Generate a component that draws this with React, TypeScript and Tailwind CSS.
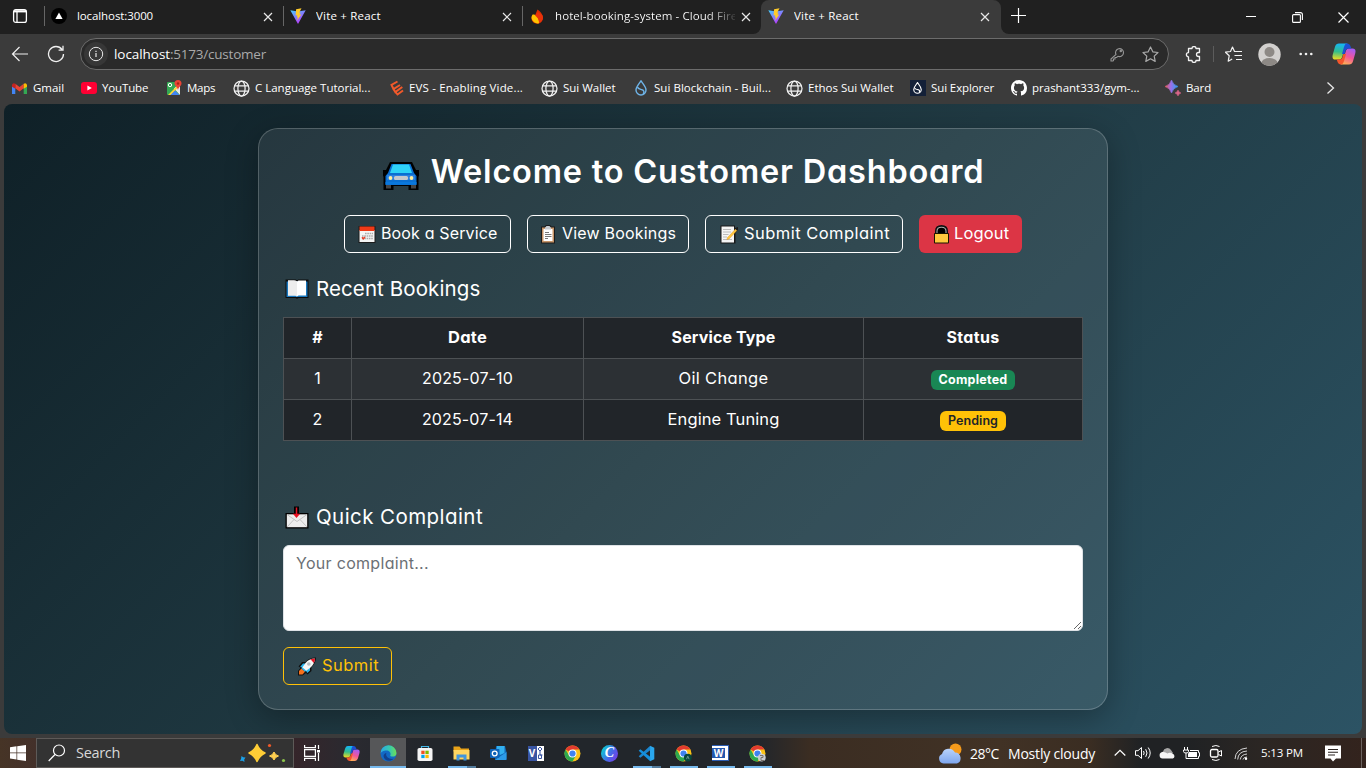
import type { ReactNode } from "react";

function Close() {
  return (
    <svg width="10" height="10" viewBox="0 0 10 10" stroke="#e8e8e8" strokeWidth="1.2" fill="none">
      <path d="M1 1l8 8M9 1l-8 8" />
    </svg>
  );
}

function Vite({ id }: { id: string }) {
  return (
    <svg width="16" height="16" viewBox="0 0 16 16">
      <defs>
        <linearGradient id={id} x1="0" y1="0" x2="0.6" y2="1">
          <stop offset="0" stopColor="#41d1ff" />
          <stop offset="1" stopColor="#bd34fe" />
        </linearGradient>
      </defs>
      <path d="M.3 2.200L8 3.400l7.700-1.200L8.300 15.600q-.3.5-.6 0z" fill={`url(#${id})`} />
      <path d="M11.500.2L6.100 1.300l-.5 6.200 1.700-.3-.5 2.300 1.100-.3-.9 3.600 4.300-6.300-1.800.3 1-2.300-1.300.2z" fill="#ffcb2b" />
    </svg>
  );
}

function Globe() {
  return (
    <svg width="17" height="17" viewBox="0 0 17 17" fill="none" stroke="#f0f0f0" strokeWidth="1.25">
      <circle cx="8.500" cy="8.500" r="7.500" />
      <ellipse cx="8.500" cy="8.500" rx="3.600" ry="7.500" />
      <path d="M1.500 5.800h14M1.500 11.200h14" />
    </svg>
  );
}

function Drop({ color }: { color: string }) {
  return (
    <svg width="12" height="16" viewBox="0 0 12 16" fill="none" stroke={color} strokeWidth="1.4">
      <path d="M6 .9C4 4 1 6.700 1 10a5 5 0 0010 0C11 6.700 8 4 6 .9z" />
      <path d="M2.500 7c.5 2.600 4 2 5.800 3.400 1 .9.8 2.500-.3 3.600" />
    </svg>
  );
}

function Copilot({ id, size }: { id: string; size: number }) {
  return (
    <svg width={size} height={size} viewBox="0 0 24 24">
      <defs>
        <linearGradient id={id + "a"} x1="0.3" y1="0" x2="0.2" y2="1">
          <stop offset="0" stopColor="#16b5f5" />
          <stop offset="0.5" stopColor="#32bd8c" />
          <stop offset="1" stopColor="#f2dc20" />
        </linearGradient>
        <linearGradient id={id + "b"} x1="0.7" y1="0" x2="0.3" y2="1">
          <stop offset="0" stopColor="#a55cf5" />
          <stop offset="0.5" stopColor="#f2559a" />
          <stop offset="1" stopColor="#ffb152" />
        </linearGradient>
      </defs>
      <path d="M7 1.500h9q-2 .3-3 4l-3 10q-.8 2-2.500 2H3.500Q-.5 17.500.8 12.500L3 4.800Q4 1.500 7 1.500z" fill={`url(#${id}a)`} />
      <path d="M17 22.500H8q2-.3 3-4l3-10q.8-2 2.500-2h4q4 0 2.700 5L21 19.200q-1 3.300-4 3.300z" fill={`url(#${id}b)`} />
      <path d="M12.500 1.500H15q2.700 0 3.600 3l.8 2h-3q-2 0-2.800 2l-1 3.500H10l2-7q.8-2.800 2-3.500z" fill="#1c50d4" />
      <path d="M11.500 22.500H9q-2.700 0-3.600-3l-.6-2h3q2 0 2.600-2l1-3.500H14l-2 7q-.8 2.800-2 3.500z" fill="#f4562c" />
    </svg>
  );
}

function Tab({ icon, children, className = "", divider = true }: { icon: ReactNode; children: ReactNode; className?: string; divider?: boolean }) {
  return (
    <div className={"mb-[2px] flex h-[31px] items-center " + className}>
      <span className={"h-[20px] w-px " + (divider ? "bg-[#666]" : "")} />
      <span className="ml-[6px] flex w-[16px] justify-center">{icon}</span>
      <span className="ml-[10px] w-[180px] overflow-hidden text-[11.5px] whitespace-nowrap text-white">{children}</span>
      <span className="ml-[6px] pt-px"><Close /></span>
    </div>
  );
}

function Mark({ icon, children, className }: { icon: ReactNode; children: ReactNode; className: string }) {
  return (
    <div className={"flex shrink-0 items-center text-[11.5px] whitespace-nowrap text-white " + className}>
      <span className="flex w-[17px] shrink-0 justify-center pt-px">{icon}</span>
      <span>{children}</span>
    </div>
  );
}

function Browser() {
  return (
    <header className="h-[104px] bg-[#3b3b3b] font-['Open_Sans',sans-serif]">
      <div className="flex h-[34px] bg-[#3b3b3b]">
        <div className="flex w-[761px] items-center rounded-br-[8px] bg-[#202020]">
          <svg className="mb-[2px] ml-[12px]" width="16" height="16" viewBox="0 0 16 16" fill="none" stroke="#fff" strokeWidth="1.3">
            <rect x="1.600" y="1.600" width="12.800" height="12.800" rx="2.200" />
            <path d="M2 3.300h12" strokeWidth="2.200" />
            <path d="M5 4v10" />
          </svg>
          <Tab
            className="ml-[16px] w-[239px]"
            icon={
              <svg width="16" height="16" viewBox="0 0 16 16">
                <circle cx="8" cy="8" r="8" fill="#000" />
                <path d="M8 4.500l3.600 6.500H4.400z" fill="#fff" />
              </svg>
            }
          >
            <span className="tracking-[-0.1px]">localhost:3000</span>
          </Tab>
          <Tab className="w-[239px]" icon={<Vite id="v1" />}>
            <span className="tracking-[0.2px]">Vite + React</span>
          </Tab>
          <Tab
            className="w-[239px]"
            icon={
              <svg width="12" height="15" viewBox="0 0 12 15">
                <path d="M6.500.5C9 2 12 5.500 12 9a5.600 5.600 0 01-5.800 5.700C3 14.700.5 12.500.5 9.300c0-1.300.5-2.500 1.200-3.500L4 6.500z" fill="#dd2c00" />
                <path d="M1.700 5.500C4 5 8.500 8 8 14.200A6 6 0 01.5 9c0-1.500.5-2.700 1.200-3.500z" fill="#ffc400" />
                <path d="M4 6.500C5.800 7.800 8.300 10 8 14.200c2-1 3.800-3 4-5.200 0-1-.3-2-.7-3L7 3z" fill="#e8320a" />
              </svg>
            }
          >
            <span className="bg-linear-to-r from-white from-84% to-[#333] bg-clip-text tracking-[0.08px] text-transparent">hotel-booking-system - Cloud Fire</span>
          </Tab>
        </div>
        <div className="flex w-[240px] bg-[#202020]">
          <div className="flex w-[240px] items-center rounded-t-[8px] bg-[#3b3b3b]">
            <Tab divider={false} icon={<Vite id="v2" />}>
              <span className="tracking-[0.2px]">Vite + React</span>
            </Tab>
          </div>
        </div>
        <div className="flex flex-1 items-center rounded-bl-[8px] bg-[#202020]">
          <svg className="mb-[3px] ml-[10px]" width="15" height="15" viewBox="0 0 15 15" stroke="#fff" strokeWidth="1.200">
            <path d="M7.500 0v15M0 7.500h15" />
          </svg>
          <svg className="mb-[2px] ml-[220px]" width="10" height="10" viewBox="0 0 10 10" stroke="#fff">
            <path d="M0 5.500h10" />
          </svg>
          <svg className="ml-[36px]" width="11" height="11" viewBox="0 0 11 11" fill="none" stroke="#fff" strokeWidth="1.100">
            <rect x=".6" y="2.600" width="7.800" height="7.800" rx="1" />
            <path d="M3 .6h5.400q2 0 2 2V8" />
          </svg>
          <svg className="ml-[35px]" width="11" height="11" viewBox="0 0 11 11" stroke="#fff" strokeWidth="1.200">
            <path d="M.5.5l10 10M10.500.5l-10 10" />
          </svg>
        </div>
      </div>

      <div className="flex h-[39px] items-center pt-[1px]">
        <svg className="ml-[11px]" width="18" height="16" viewBox="0 0 18 16" fill="none" stroke="#f0f0f0" strokeWidth="1.200">
          <path d="M17 8H1.500M8.500 1l-7 7 7 7" />
        </svg>
        <svg className="ml-[18px]" width="18" height="18" viewBox="0 0 18 18" fill="none" stroke="#f0f0f0" strokeWidth="1.300">
          <path d="M16.500 9A7.500 7.500 0 1115 4.500M16 .8v4.400h-4.400" />
        </svg>
        <div className="ml-[15px] flex h-[32px] w-[1089px] items-center rounded-full border border-[#6c6c6c] bg-[#2a2a2a]">
          <span className="ml-[3px] flex size-[24px] items-center justify-center rounded-full bg-[#373737]">
            <svg width="16" height="16" viewBox="0 0 16 16" fill="none" stroke="#e8e8e8">
              <circle cx="8" cy="8" r="6.700" />
              <path d="M8 7v4M8 4.800v1.200" strokeWidth="1.200" />
            </svg>
          </span>
          <span className="ml-[6px] text-[13.5px] tracking-[-0.06px] text-white">localhost</span>
          <span className="text-[13.5px] tracking-[-0.22px] text-[#a9a9a9]">:5173/customer</span>
          <svg className="ml-auto" width="15" height="15" viewBox="0 0 15 15" fill="none" stroke="#969696" strokeWidth="1.100">
            <path d="M6 7.500A4 4 0 118 9.300L6.500 10.500H5v1.500H3.500v1.500L3 14H1v-2z" />
            <circle cx="10.800" cy="4" r=".7" />
          </svg>
          <svg className="mr-[9px] ml-[17px]" width="17" height="17" viewBox="0 0 17 17" fill="none" stroke="#a9a9a9" strokeWidth="1.200" strokeLinejoin="round">
            <path d="M8.500 1l2.300 4.800 5.200.7-3.800 3.600 1 5.300-4.700-2.600-4.700 2.600 1-5.300L1 6.500l5.200-.7z" />
          </svg>
        </div>
        <svg className="ml-[16px]" width="17" height="17" viewBox="0 0 17 17" fill="none" stroke="#f2f2f2" strokeWidth="1.300" strokeLinejoin="round">
          <path d="M5 2.500h2a2 2 0 014 0h3.500v4h-1a2 2 0 000 4h1v4H11a2 2 0 01-4 0H3.500v-3.700a2.100 2.100 0 010-4.200V2.500z" />
        </svg>
        <span className="ml-[11px] h-[16px] w-px bg-[#5c5c5c]" />
        <svg className="ml-[11px]" width="17" height="17" viewBox="0 0 17 17" fill="none" stroke="#f2f2f2" strokeWidth="1.200" strokeLinejoin="round">
          <path d="M10 5.500h-.5L7.500 1 5.500 5.500l-5 .7 3.700 3.600-1 5.400 4-2.200M10 5.500h7M9.500 9.500H17M11 13.500h6" />
        </svg>
        <svg className="ml-[16px]" width="23" height="23" viewBox="0 0 23 23">
          <clipPath id="av"><circle cx="11.500" cy="11.500" r="11.200" /></clipPath>
          <g clipPath="url(#av)">
            <path d="M0 0h23v23H0z" fill="#d2d0ce" />
            <circle cx="11.500" cy="9" r="5" fill="#8d8985" />
            <ellipse cx="11.500" cy="20" rx="8" ry="5" fill="#8d8985" />
          </g>
        </svg>
        <svg className="ml-[18px]" width="14" height="4" viewBox="0 0 14 4" fill="#f2f2f2">
          <circle cx="1.700" cy="2" r="1.300" />
          <circle cx="7" cy="2" r="1.300" />
          <circle cx="12.300" cy="2" r="1.300" />
        </svg>
        <span className="ml-[19px]"><Copilot id="c1" size={24} /></span>
      </div>

      <div className="flex h-[29px] items-center pl-[11px]">
        <Mark
          className="w-[69px] gap-[5px] tracking-[-0.04px]"
          icon={
            <svg width="15" height="11" viewBox="0 0 15 11">
              <path d="M0 1.500V11h3.300V4z" fill="#4285f4" />
              <path d="M15 1.500V11h-3.300V4z" fill="#34a853" />
              <path d="M3.300.7l4.200 3.200L11.700.7v4.500L7.500 8.400 3.300 5.200z" fill="#ea4335" />
              <path d="M15 1.700v2L11.700 5.700V.7Q14-.7 15 1.700z" fill="#fbbc04" />
              <path d="M0 1.700v2L3.300 5.700V.7Q1-.7 0 1.700z" fill="#c5221f" />
            </svg>
          }
        >
          Gmail
        </Mark>
        <Mark
          className="w-[85px] gap-[5px] tracking-[-0.15px]"
          icon={
            <svg width="16" height="12" viewBox="0 0 16 12">
              <rect width="16" height="12" rx="3" fill="#f03" />
              <path d="M6.400 3.400L10.800 6l-4.400 2.600z" fill="#fff" />
            </svg>
          }
        >
          YouTube
        </Mark>
        <Mark
          className="w-[68px] gap-[5px] tracking-[-0.25px]"
          icon={
            <svg width="16" height="16" viewBox="0 0 16 16">
              <rect x="1" y="2" width="13" height="13" rx="1" fill="#34a853" />
              <path d="M8 8.500L14 3v12z" fill="#e8eaed" />
              <path d="M2 15L13 4v2.500L5 15z" fill="#fdd835" />
              <path d="M4.500 15L9 10.500 13.500 15z" fill="#4285f4" />
              <circle cx="4" cy="5" r="1.700" fill="none" stroke="#fff" />
              <path d="M12 0a3.500 3.500 0 00-3.500 3.500C8.500 6 11.500 7 12 10c.5-3 3.500-4 3.500-6.500A3.500 3.500 0 0012 0z" fill="#ea4335" />
              <circle cx="12" cy="3.500" r="1.200" fill="#a52714" />
            </svg>
          }
        >
          Maps
        </Mark>
        <Mark className="w-[155px] gap-[5px]" icon={<Globe />}>C Language Tutorial...</Mark>
        <Mark
          className="w-[153px] gap-[4px] tracking-[0.16px]"
          icon={
            <svg width="16" height="16" viewBox="0 0 16 16" fill="none" stroke="#f2592b" strokeWidth="2">
              <path d="M8.500 1.500L2.500 5l2 4L11 5" />
              <path d="M4.500 9l1.800 3 7-5M6.500 12l2 2.500 5.500-4" />
            </svg>
          }
        >
          EVS - Enabling Vide...
        </Mark>
        <Mark className="w-[91px] gap-[5px]" icon={<Globe />}>Sui Wallet</Mark>
        <Mark className="w-[154px] gap-[5px] tracking-[0.04px]" icon={<Drop color="#6fb4e8" />}>Sui Blockchain - Buil...</Mark>
        <Mark className="w-[123px] gap-[5px]" icon={<Globe />}>Ethos Sui Wallet</Mark>
        <Mark
          className="w-[101px] gap-[5px] tracking-[-0.1px]"
          icon={
            <span className="flex size-[16px] items-center justify-center bg-[#132038]">
              <svg width="9" height="12" viewBox="0 0 12 16" fill="none" stroke="#fff" strokeWidth="1.500">
                <path d="M6 .9C4 4 1 6.700 1 10a5 5 0 0010 0C11 6.700 8 4 6 .9z" />
                <path d="M2.500 8c.5 2.600 4 1.500 5.800 3 1 .9.8 2-.3 3" />
              </svg>
            </span>
          }
        >
          Sui Explorer
        </Mark>
        <Mark
          className="w-[154px] gap-[5px]"
          icon={
            <svg width="16" height="16" viewBox="0 0 16 16" fill="#fff">
              <path d="M8 0C3.580 0 0 3.580 0 8c0 3.540 2.290 6.530 5.470 7.590.4.070.55-.17.55-.38 0-.19-.01-.82-.01-1.490-2.010.37-2.530-.49-2.690-.94-.09-.23-.48-.94-.82-1.130-.28-.15-.68-.52-.01-.53.63-.01 1.080.58 1.230.82.72 1.210 1.870.87 2.330.66.07-.52.28-.87.51-1.070-1.780-.2-3.640-.89-3.640-3.950 0-.87.31-1.590.82-2.150-.08-.2-.36-1.020.08-2.120 0 0 .67-.21 2.200.82.64-.18 1.320-.27 2-.27s1.360.09 2 .27c1.530-1.040 2.200-.82 2.200-.82.44 1.100.16 1.920.08 2.120.51.56.82 1.270.82 2.150 0 3.070-1.870 3.750-3.650 3.950.29.25.54.73.54 1.480 0 1.070-.01 1.930-.01 2.200 0 .21.15.46.55.38A8.010 8.010 0 0016 8c0-4.420-3.580-8-8-8z" />
            </svg>
          }
        >
          prashant333/gym-...
        </Mark>
        <Mark
          className="w-[162px] gap-[5px] tracking-[-0.1px]"
          icon={
            <svg width="16" height="16" viewBox="0 0 16 16">
              <defs>
                <linearGradient id="bard">
                  <stop offset="0" stopColor="#ec5b57" />
                  <stop offset="0.45" stopColor="#9c6fe8" />
                  <stop offset="1" stopColor="#28a0f0" />
                </linearGradient>
              </defs>
              <path d="M6.500 0q1.500 5 6.500 6.500-5 1.500-6.500 6.500Q5 8 0 6.500 5 5 6.500 0z" fill="url(#bard)" stroke="url(#bard)" strokeWidth=".6" />
              <path d="M13 10q.7 2.300 3 3-2.300.7-3 3-.7-2.300-3-3 2.300-.7 3-3z" fill="#d9658a" stroke="#d9658a" strokeWidth=".5" />
            </svg>
          }
        >
          Bard
        </Mark>
        <svg className="shrink-0" width="9" height="14" viewBox="0 0 9 14" fill="none" stroke="#e8e8e8" strokeWidth="1.300">
          <path d="M1.500 1.500L7.500 7l-6 5.500" />
        </svg>
      </div>
    </header>
  );
}

function Car() {
  return (
    <svg width="38" height="32" viewBox="0 0 38 32">
      <path d="M8 2h22l4 8h3v5.500L36.500 17v13h-10v-4h-15v4h-10V17L1 15.500V10h3z" fill="#000" />
      <rect x="4" y="23.500" width="5" height="5" fill="#454545" />
      <rect x="29" y="23.500" width="5" height="5" fill="#454545" />
      <path d="M9.500 4h19l3.500 9 2.500 3v9h-31v-9L6 13z" fill="#0a6fd0" />
      <path d="M11 4.500h16l3 8.500H8z" fill="#2fd2f7" />
      <path d="M5 15h28v5H5z" fill="#2b7fe0" />
      <path d="M3.500 22h31v2.500h-31z" fill="#0a78dc" />
      <rect x="12" y="16" width="14" height="4" rx="1.500" fill="#c4c8ce" />
      <circle cx="8.500" cy="18" r="1.900" fill="#fdf0a0" />
      <circle cx="29.500" cy="18" r="1.900" fill="#fdf0a0" />
    </svg>
  );
}

function CalendarIcon() {
  return (
    <svg width="18" height="19" viewBox="0 0 18 19">
      <rect x=".5" y="1" width="17" height="17" fill="#1d1d1d" />
      <path d="M1.500 5h15v12h-15z" fill="#f4f4f4" />
      <path d="M1.500 1.500h15V6h-15z" fill="#f03a17" />
      <path d="M7 8.500h8M4 11h11M4 13.500h11" stroke="#aaa" strokeWidth="1.600" strokeDasharray="1.600 .7" />
      <path d="M4 12.200l1.300 1.600L7 12" stroke="#e8412a" strokeWidth="1.500" fill="none" />
    </svg>
  );
}

function ClipboardIcon() {
  return (
    <svg width="16" height="19" viewBox="0 0 16 19">
      <path d="M1 1.500h3.500L6 0h4l1.500 1.500H15V18.500H1z" fill="#1b1b1b" />
      <rect x="2" y="2.500" width="12" height="15" fill="#c69468" />
      <path d="M3.500 4h9v12h-9z" fill="#fff" />
      <path d="M5 2.800L6.500 1h3L11 2.800V4.500H5z" fill="#c7cbd0" />
      <path d="M5 7.500h4M5 9.500h6.500M5 11.500h6.500M5 13.500h3" stroke="#777" />
    </svg>
  );
}

function MemoIcon() {
  return (
    <svg width="19" height="19" viewBox="0 0 19 19">
      <path d="M.5.500H15V3l3-1v3l-2.500 3v10.500H.5z" fill="#191919" />
      <path d="M1.500 1.500H14V17.500H1.500z" fill="#f5f5f5" />
      <path d="M3 4.500h8M3 7h8M3 9.500h5.500M3 12h4M3 14.500h9" stroke="#bbb" />
      <path d="M15.500 4l1.500 1.500L9 14l-2.200.7.700-2.200z" fill="#ffc83d" stroke="#d98b20" strokeWidth=".4" />
      <path d="M15.500 4l1-1 1.400 1.400-.9 1z" fill="#222" />
    </svg>
  );
}

function LockIcon() {
  return (
    <svg width="17" height="19" viewBox="0 0 17 19">
      <path d="M3 9V6q0-5 5.500-5T14 6v3" fill="#000" stroke="#111" strokeWidth="2" />
      <path d="M4 9V6.200q0-4 4.500-4t4.500 4V9" fill="none" stroke="#a9a9a9" strokeWidth="1.100" />
      <rect x="1" y="8" width="15" height="10.500" rx="1" fill="#1a1400" />
      <rect x="2" y="9" width="13" height="8.500" fill="#ffc83d" />
    </svg>
  );
}

function BookIcon() {
  return (
    <svg width="24" height="20" viewBox="0 0 24 20">
      <path d="M.5.500h10.500l1 .7 1-.7h10.500v18.500H13.500l-1.500.8-1.500-.8H.5z" fill="#0c0c0c" />
      <path d="M1.500 2.500H12V18H1.500zM12 2.500h10.500V18H12z" fill="#1877bd" />
      <path d="M3 1.500h7.500L12 2.500l1.500-1H21v15h-7.500l-1.500 1-1.500-1H3z" fill="#fff" />
      <path d="M12 2.500L9 1.500H3v15h7.500l1.500 1z" fill="#ededed" />
    </svg>
  );
}

function MailIcon() {
  return (
    <svg width="24" height="23" viewBox="0 0 24 23">
      <path d="M.5 7H9V.500h5V7h9.500v15.500H.5z" fill="#000" />
      <path d="M1.800 8.300h20.400v12.900H1.800z" fill="#ededed" />
      <path d="M2 8.500l10 7 10-7M2 21l7-7.500M22 21l-7-7.500" fill="none" stroke="#c3c3c3" />
      <path d="M11.500 1.500v8.500M9.500 8.500l2 2.300 2-2.300z" stroke="#e81224" strokeWidth="1.500" fill="#e81224" />
    </svg>
  );
}

function RocketIcon() {
  return (
    <svg width="20" height="19" viewBox="0 0 20 19">
      <path d="M19 .5c-5 0-8 1.500-10.500 4.500H5L1.500 9.500l2 1.200L1 14v4.500h4.500L9 16l1.500 1.500 4-3.500v-4C17.500 7.500 19 4.500 19 .5z" fill="#101010" />
      <path d="M6 6.500h3l-3.300 4.500-2.500-1.300zM13 10.500v3L10.300 16l-1.500-2.500z" fill="#28b5ee" />
      <path d="M17.800 1.500c-4 0-7 1.500-9.300 4.500L5 11l3.500 3.200L13 11c3-2.500 4.800-5.500 4.800-9.500z" fill="#f6f6f6" />
      <path d="M18 1.500l-4.500.8 3.300 3.700Q18 4 18 1.500z" fill="#e81224" />
      <circle cx="11.800" cy="7" r="1.800" fill="#b5bbc1" />
      <path d="M4.500 11.500L8 14.800l-2.500 2.700H2V14z" fill="#f7711c" />
      <path d="M5 11l3.500 3.200" stroke="#28b5ee" strokeWidth="1.600" />
    </svg>
  );
}

function Dashboard() {
  return (
    <main className="mx-[4px] flex h-[630px] justify-center overflow-hidden rounded-[8px] bg-[linear-gradient(135deg,#0f2027,#203a43_50%,#2c5364)] pt-[24px] font-['Inter',sans-serif] text-white [font-feature-settings:'cv11']">
      <section className="h-[582px] w-[850px] rounded-[20px] border border-white/20 bg-white/8 p-[24px] shadow-[0_8px_32px_rgba(0,0,0,0.3)]">
        <h1 className="flex h-[38px] items-center justify-center gap-[11px] text-[32.5px] font-semibold whitespace-nowrap">
          <span className="mt-[7px]"><Car /></span>
          <span className="tracking-[0.8px]">Welcome to Customer Dashboard</span>
        </h1>
        <nav className="mt-[24px] flex justify-center gap-[16px] text-[16px] whitespace-nowrap">
          <button className="flex h-[38px] w-[167px] items-center gap-[5px] rounded-[6px] border border-white pl-[13px]">
            <CalendarIcon />
            <span className="mb-[2px] tracking-[0.15px]">Book a Service</span>
          </button>
          <button className="flex h-[38px] w-[162px] items-center gap-[5px] rounded-[6px] border border-white pl-[12px]">
            <ClipboardIcon />
            <span className="mb-[2px] ml-px tracking-[0.19px]">View Bookings</span>
          </button>
          <button className="flex h-[38px] w-[198px] items-center gap-[5px] rounded-[6px] border border-white pl-[14px]">
            <MemoIcon />
            <span className="mb-[2px] text-[16.5px] tracking-[0.46px]">Submit Complaint</span>
          </button>
          <button className="flex h-[38px] w-[103px] items-center gap-[4px] rounded-[6px] bg-[#dc3545] pl-[14px]">
            <LockIcon />
            <span className="mb-[2px] text-[16.5px] tracking-[0.15px]">Logout</span>
          </button>
        </nav>
        <h2 className="mt-[24px] flex h-[24px] items-center gap-[7px] pl-[2px] text-[20.5px]">
          <BookIcon />
          <span className="tracking-[0.1px]">Recent Bookings</span>
        </h2>
        <table className="mt-[16px] w-[800px] table-fixed border-collapse text-center text-[16px] [&_td]:h-[41px] [&_td]:border [&_td]:border-[#4d5154] [&_td]:p-0 [&_td]:pb-[2px] [&_th]:h-[41px] [&_th]:border [&_th]:border-[#4d5154] [&_th]:p-0 [&_th]:pb-[2px]">
          <colgroup>
            <col className="w-[68px]" />
            <col className="w-[232px]" />
            <col className="w-[280px]" />
            <col className="w-[219px]" />
          </colgroup>
          <thead className="bg-[#212529] font-bold">
            <tr>
              <th>#</th>
              <th className="text-[16.5px] tracking-[0.25px]">Date</th>
              <th className="tracking-[0.13px]">Service Type</th>
              <th className="tracking-[0.32px]">Status</th>
            </tr>
          </thead>
          <tbody>
            <tr className="bg-[#2c3034]">
              <td>1</td>
              <td className="tracking-[0.15px]">2025-07-10</td>
              <td className="text-[16.5px] tracking-[0.34px]">Oil Change</td>
              <td>
                <span className="mx-auto mt-[4px] flex h-[20px] w-[84px] items-center justify-center rounded-[6px] bg-[#198754] text-[12.5px] font-bold tracking-[0.23px]">Completed</span>
              </td>
            </tr>
            <tr className="bg-[#212529]">
              <td>2</td>
              <td className="tracking-[0.15px]">2025-07-14</td>
              <td className="text-[16.5px] tracking-[0.1px]">Engine Tuning</td>
              <td>
                <span className="mx-auto mt-[4px] flex h-[20px] w-[66px] items-center justify-center rounded-[6px] bg-[#ffc107] text-[12.5px] font-semibold tracking-[0.06px] text-[#212529]">Pending</span>
              </td>
            </tr>
          </tbody>
        </table>
        <h2 className="mt-[64px] flex h-[24px] items-center gap-[7px] pl-[2px] text-[20.5px]">
          <MailIcon />
          <span className="tracking-[0.43px]">Quick Complaint</span>
        </h2>
        <textarea
          className="mt-[16px] block h-[86px] w-[800px] resize rounded-[6px] border border-[#dee2e6] bg-white px-[12px] py-[5px] text-[16px] leading-[24px] tracking-[0.3px] text-[#212529] placeholder:text-[#6b7075]"
          placeholder="Your complaint..."
        />
        <button className="mt-[16px] flex h-[38px] w-[109px] items-center gap-[5px] rounded-[6px] border border-[#ffc107] pl-[13px] text-[16.5px] text-[#ffc107]">
          <RocketIcon />
          <span className="mb-[2px] tracking-[0.45px]">Submit</span>
        </button>
      </section>
    </main>
  );
}

function Chrome({ badge }: { badge?: ReactNode }) {
  return (
    <svg width="17" height="17" viewBox="0 0 17 17">
      <circle cx="8.500" cy="8.500" r="8" fill="#fbc116" />
      <path d="M8.500 8.500L1.570 4.500a8 8 0 0113.860 0z" fill="#e33b2e" />
      <path d="M1.570 4.500A8 8 0 008.500 16.500L12 10.500 8.500 8.500 5 10.500z" fill="#2da94f" />
      <path d="M8.500 4.500h6.930L12 10.500z" fill="#fbc116" />
      <circle cx="8.500" cy="8.500" r="4" fill="#fff" />
      <circle cx="8.500" cy="8.500" r="3.100" fill="#3f82f0" />
      {badge}
    </svg>
  );
}

function TaskIcon({ children, className = "w-[37px]", bar = "" }: { children: ReactNode; className?: string; bar?: string }) {
  return (
    <span className={"flex h-[30px] shrink-0 flex-col items-center justify-between " + className}>
      <span className="flex h-[28px] items-center pt-[2px]">{children}</span>
      <span className={"h-[2px] " + bar} />
    </span>
  );
}

const BAR = "w-[28px] bg-[#76b9ed]";
const BAR_MULTI = "w-[28px] bg-[linear-gradient(90deg,#76b9ed_19px,#527b9c_19px)]";

function Taskbar() {
  return (
    <footer className="flex h-[30px] items-center overflow-hidden bg-[linear-gradient(90deg,#463426_0px,#43302a_36px,#35252a_294px,#2a2a30_350px,#22262b_430px,#22262b_760px,#3b2d22_810px,#413225_1000px,#3a2d22_1090px,#202224_1140px,#202224_1190px,#2b2623_1260px,#33231d_1366px)] font-['Open_Sans',sans-serif] whitespace-nowrap text-white">
      <svg className="ml-[10px] shrink-0" width="16" height="16" viewBox="0 0 16 16" fill="#fff">
        <path d="M0 2.200l6.500-.9v6.200H0zM7.200 1.200L16 0v7.500H7.200zM0 8.300h6.500v6.200L0 13.600zM7.200 8.300H16V16l-8.800-1.200z" />
      </svg>
      <div className="ml-[10px] flex h-[30px] w-[258px] shrink-0 items-center border border-[#5d5a58] bg-[#333]">
        <svg className="ml-[11px]" width="18" height="18" viewBox="0 0 18 18" fill="none" stroke="#fff" strokeWidth="1.200">
          <circle cx="11" cy="6.500" r="5.500" />
          <path d="M7 10.500L.7 17" />
        </svg>
        <span className="ml-[10px] text-[14.5px] tracking-[-0.32px] text-[#d8d8d8]">Search</span>
        <svg className="mr-[7px] ml-auto" width="48" height="22" viewBox="0 0 48 22">
          <path d="M19 2.500q2.500 6 8 8.500-5.500 2.500-8 8.500-2.500-6-8-8.500 5.500-2.500 8-8.500z" fill="#ffcd36" stroke="#ffcd36" strokeLinejoin="round" strokeWidth="1.500" />
          <path d="M36 10q1 3 4.500 4-3.500 1-4.500 4-1-3-4.500-4 3.500-1 4.500-4z" fill="#ffcf50" stroke="#ffcf50" />
          <path d="M3.500 14l1.700 1.300 2.300.2-1.300 2 .3 2.500-2-1.200-2.500.3 1-2.200z" fill="#1ba1e8" />
          <circle cx="31.500" cy="3.500" r="1.600" fill="#f25a29" />
          <circle cx="45.500" cy="18.500" r="1.600" fill="#8bc34a" />
        </svg>
      </div>
      <TaskIcon>
        <svg width="17" height="16" viewBox="0 0 17 16" fill="none" stroke="#fff" strokeWidth="1.200">
          <path d="M.6 0v2.700h10.800V0M.6 16v-2.700h10.800V16M.6 4.600h10.800v6.800H.6zM14.500 0v4M14.500 8v8" />
          <path d="M13 5h3v2.500h-3z" fill="#fff" stroke="none" />
        </svg>
      </TaskIcon>
      <TaskIcon className="w-[37px] pl-[3px]"><Copilot id="c2" size={17} /></TaskIcon>
      <TaskIcon className="ml-[2px] w-[36px] bg-[#565759]" bar="w-[36px] bg-[#76b9ed]">
        <svg width="17" height="17" viewBox="0 0 17 17">
          <defs>
            <linearGradient id="edge" x1="0" x2="1">
              <stop offset="0" stopColor="#2aa6e8" />
              <stop offset="0.6" stopColor="#38cba8" />
              <stop offset="1" stopColor="#6fdf55" />
            </linearGradient>
          </defs>
          <circle cx="8.500" cy="8.500" r="8" fill="#1269c4" />
          <path d="M.5 8.500A8 8 0 0116.500 8c0 3-2.500 4-5 3.500-1.500-.3-1.500-1-1-1.800C11 7.500 9 5.500 6.500 5.500 3.500 5.500.8 7 .5 8.500z" fill="url(#edge)" />
          <path d="M6.500 8C5 11 8 14.500 13.500 13.800 10 17.500 4 16 3.500 11 3.500 9.500 5 8 6.500 8z" fill="#10408e" />
        </svg>
      </TaskIcon>
      <TaskIcon>
        <svg width="16" height="17" viewBox="0 0 16 17">
          <path d="M4.500 4V1.500h7V4" fill="none" stroke="#45b8e8" strokeWidth="1.200" />
          <rect x=".5" y="3" width="15" height="13" rx="1.800" fill="#f5f5f5" />
          <path d="M4.300 5.700h3.300V9H4.300z" fill="#f25022" />
          <path d="M8.400 5.700h3.300V9H8.400z" fill="#7fba00" />
          <path d="M4.300 9.800h3.300v3.300H4.300z" fill="#00a4ef" />
          <path d="M8.400 9.800h3.300v3.300H8.400z" fill="#ffb900" />
        </svg>
      </TaskIcon>
      <TaskIcon bar={BAR_MULTI}>
        <svg width="17" height="15" viewBox="0 0 17 15">
          <path d="M.5.500h6l1.500 2H16v3H.5z" fill="#e9a319" />
          <path d="M.5 4h16v9.500H.5z" fill="#ffd661" />
          <path d="M3.500 14.500V8.500h10v6h-3V11.500h-4v3z" fill="#4296dc" />
        </svg>
      </TaskIcon>
      <TaskIcon>
        <svg width="17" height="16" viewBox="0 0 17 16">
          <path d="M6 1h9l1.500 6v8H5z" fill="#1066b5" />
          <path d="M7 1h7.500v7L10 10 6 7z" fill="#32b0f0" />
          <path d="M5 15l11.500-8v7q0 1-1 1z" fill="#2c9be8" />
          <rect y="4" width="9.500" height="9" rx="1" fill="#0d62b8" />
          <circle cx="4.700" cy="8.500" r="2.400" fill="none" stroke="#fff" strokeWidth="1.300" />
        </svg>
      </TaskIcon>
      <TaskIcon>
        <span className="flex h-[15px] w-[16px] bg-white">
          <span className="flex w-[9px] items-center justify-center bg-[#3955a3] text-[10px] font-bold">V</span>
          <svg width="7" height="15" viewBox="0 0 7 15" fill="none" stroke="#3955a3">
            <path d="M3 1l2 2-2 2-2-2zM3 5v4h2.500M1.500 9h3v3.500h-3z" />
          </svg>
        </span>
      </TaskIcon>
      <TaskIcon><Chrome /></TaskIcon>
      <TaskIcon>
        <span className="flex size-[17px] items-center justify-center rounded-full bg-[linear-gradient(120deg,#10c4d4_15%,#4668e8_55%,#8330e8)] pb-px font-['Liberation_Serif',serif] text-[14px] leading-none font-bold italic">C</span>
      </TaskIcon>
      <TaskIcon bar={BAR_MULTI}>
        <svg width="17" height="17" viewBox="0 0 17 17">
          <path d="M12 .7l4.300 2v11.600l-4.300 2z" fill="#2aa7ee" />
          <path d="M12.200.7v4.500L2.300 12.800.7 11.300z" fill="#1b86cf" />
          <path d="M12.200 16.300v-4.500L2.300 4.200.7 5.700z" fill="#1590dd" />
        </svg>
      </TaskIcon>
      <TaskIcon bar={BAR}>
        <Chrome
          badge={
            <g>
              <circle cx="12.800" cy="12.600" r="3.900" fill="#07483d" />
              <path d="M11.500 14.200l1.300-3 1.300 3" stroke="#8fb5ad" strokeWidth=".7" fill="none" />
            </g>
          }
        />
      </TaskIcon>
      <TaskIcon bar={BAR}>
        <span className="flex h-[16px] w-[17px] border-y border-r border-[#2b5bb0] bg-white">
          <span className="my-[2px] flex w-[13px] items-center justify-center bg-[#2458ae] text-[10px] leading-none font-bold">W</span>
        </span>
      </TaskIcon>
      <TaskIcon bar={BAR}>
        <Chrome
          badge={
            <g>
              <circle cx="12.800" cy="12.600" r="3.900" fill="#c9ccd2" />
              <path d="M11 10.500h3v2h-2v3h3" stroke="#77706c" fill="none" />
            </g>
          }
        />
      </TaskIcon>
      <svg className="ml-[162px] shrink-0" width="25" height="21" viewBox="0 0 25 21">
        <defs>
          <linearGradient id="cloud" x1="0" y1="0" x2="0" y2="1">
            <stop offset="0" stopColor="#b9d3fa" />
            <stop offset="1" stopColor="#7ea6ee" />
          </linearGradient>
        </defs>
        <circle cx="17.500" cy="6.500" r="6" fill="#f59a1b" />
        <path d="M5.500 20.500A5 5 0 014 11a7 7 0 0113-1.500 5.700 5.700 0 012 11z" fill="url(#cloud)" />
      </svg>
      <span className="ml-[7px] w-[38px] text-[14px] tracking-[-0.46px]">28°C</span>
      <span className="w-[106px] text-[14px] tracking-[-0.2px]">Mostly cloudy</span>
      <svg className="shrink-0" width="12" height="8" viewBox="0 0 12 8" fill="none" stroke="#fff" strokeWidth="1.200">
        <path d="M.7 6.500L6 1.300l5.300 5.200" />
      </svg>
      <svg className="ml-[9px] shrink-0" width="17" height="14" viewBox="0 0 17 14" fill="none" stroke="#fff">
        <path d="M.5 4.700h2.500L6.500 1.500v11L3 9.300H.5zM8.500 5q1.300 2 0 4M10.700 3.200q2.600 3.800 0 7.600M13.200 1.500q4 5.500 0 11" />
      </svg>
      <svg className="ml-[7px] shrink-0" width="17" height="11" viewBox="0 0 17 11">
        <path d="M3 8a3 3 0 011-4.500A4.500 4.500 0 0112 2l2 3z" fill="#a6a6a6" />
        <path d="M3.500 10.500a3.300 3.300 0 01-.3-6.500Q6 3.500 8.500 5.500q1.500-1.300 4-.5.800.2 1.300.8a2.500 2.500 0 010 4.700z" fill="#f5f5f5" />
      </svg>
      <svg className="ml-[7px] shrink-0" width="17" height="12" viewBox="0 0 17 12" fill="none" stroke="#fff">
        <path d="M1.500 0v3M4.500 0v3M.5 3h5v1.500q0 1.500-2.500 1.500T.5 4.500zM3 6v5.500h12.500V9.300h1V5.700h-1V3.500H7" />
        <path d="M6 5h8v5H5V7z" fill="#fff" stroke="none" />
      </svg>
      <svg className="ml-[9px] shrink-0" width="14" height="16" viewBox="0 0 14 16" fill="none" stroke="#fff">
        <path d="M3 1.500Q7-.5 10.500 1.500M3 14.500q4 2 7.500 0" />
        <rect x="1.500" y="4.500" width="7.500" height="7.500" rx="1.500" strokeWidth="1.300" />
        <path d="M9.500 7l3-1.500v5.500l-3-1.500" />
      </svg>
      <svg className="ml-[11px] shrink-0" width="14" height="13" viewBox="0 0 14 13" fill="none" stroke="#d5d5d5">
        <path d="M1 12Q1.500 2 13 1M3.700 12.500Q4 4.500 13 4M6.300 12.500Q7 7.500 13 7M9 12.500q.5-2.500 4-2.500" />
        <circle cx="12" cy="11.800" r="1.200" fill="#fff" stroke="none" />
      </svg>
      <span className="ml-[13px] w-[64px] text-[11.5px] tracking-[-0.14px]">5:13 PM</span>
      <svg className="shrink-0" width="16" height="17" viewBox="0 0 16 17">
        <path d="M0 .5h16v13h-5L8 16.500l-2.500-3H0z" fill="#fff" />
        <path d="M3 4.500h10M3 7.300h10M3 10h7" stroke="#2b2320" strokeWidth="1.100" />
      </svg>
      <span className="mr-[4px] ml-auto h-[30px] w-px bg-[#6b625e]" />
    </footer>
  );
}

export default function App() {
  return (
    <div className="flex h-[768px] w-[1366px] flex-col overflow-hidden bg-[#3b3b3b]">
      <Browser />
      <Dashboard />
      <div className="h-[4px] shrink-0" />
      <Taskbar />
    </div>
  );
}
